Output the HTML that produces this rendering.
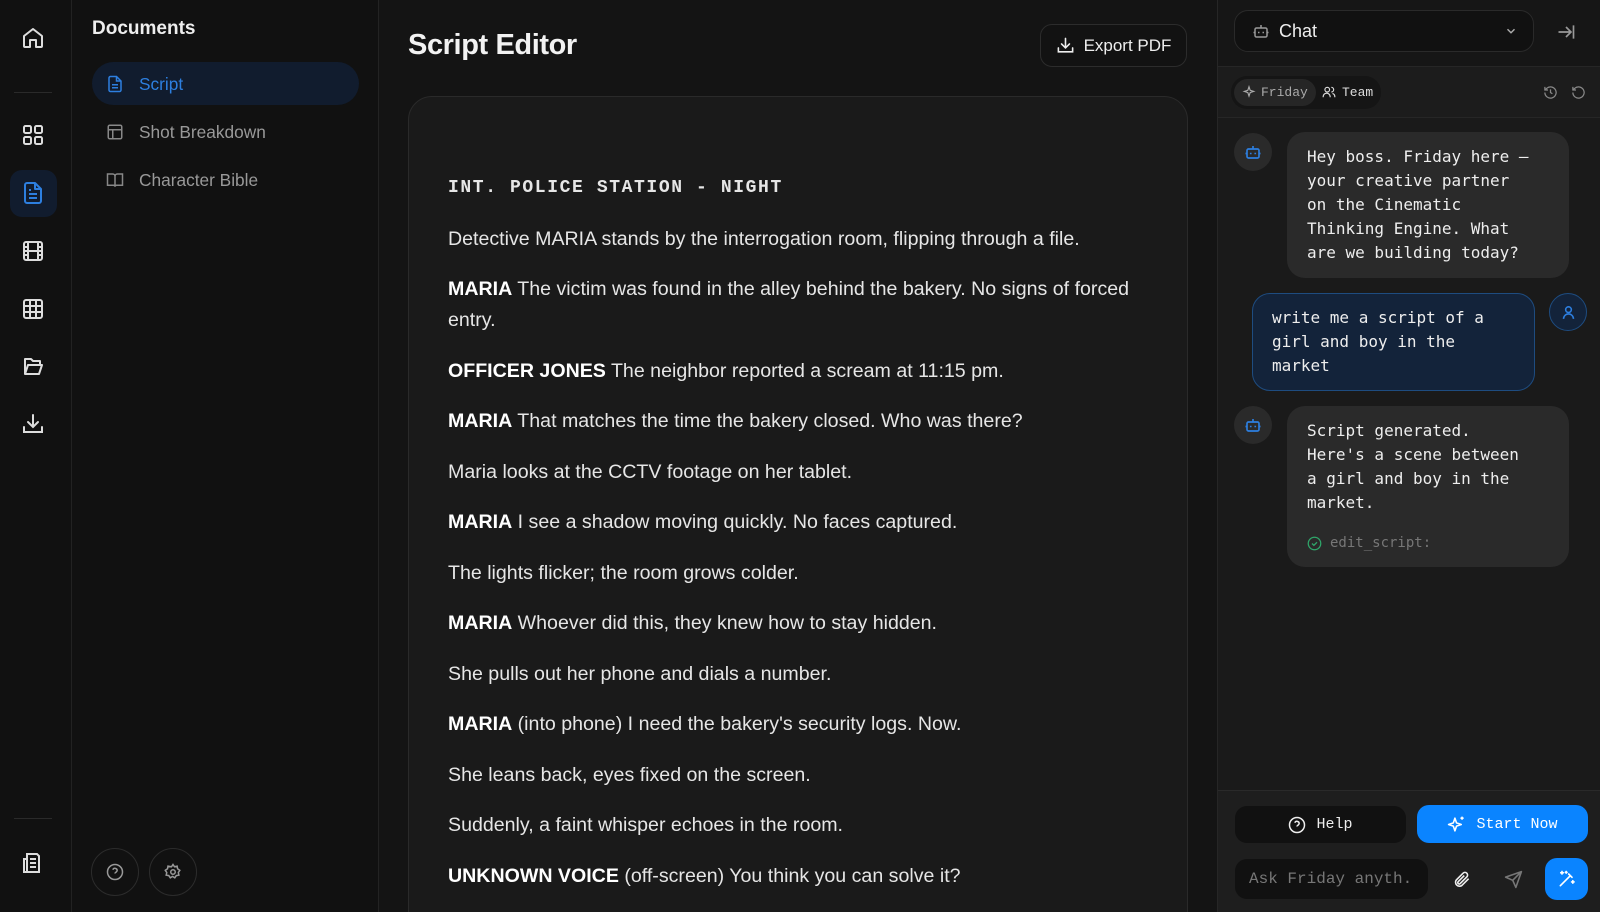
<!DOCTYPE html>
<html style="width:1600px;height:912px;overflow:hidden"><head><meta charset="utf-8"><style>
*{box-sizing:border-box;margin:0;padding:0}
body{width:1600px;height:912px;overflow:hidden;background:#111;font-family:"Liberation Sans",sans-serif;color:#eee;position:relative}
.abs{position:absolute}
svg{display:block}
.rail{left:0;top:0;width:72px;height:912px;background:#111;border-right:1px solid #222}
.ri{position:absolute;left:21px;width:24px;height:24px}
.side{left:72px;top:0;width:307px;height:912px;background:#111;border-right:1px solid #232323}
.main{left:379px;top:0;width:838px;height:912px;background:#141414}
.card{left:29px;top:96px;width:780px;height:840px;background:#1a1a1a;border:1px solid #2a2a2a;border-radius:24px}
.card p{font-size:19.6px;line-height:31px;color:#e6e6e6;margin-bottom:19.5px}
.card b{color:#fff}
.chat{left:1217px;top:0;width:383px;height:912px;background:#1a1a1a;border-left:1px solid #262626}
.mono{font-family:"Liberation Mono","DejaVu Sans Mono",monospace}
.bub{font-family:"DejaVu Sans Mono","Liberation Mono",monospace;font-size:16px;line-height:24px;color:#eee}
</style></head><body>
<div class="abs rail">
 <svg class="ri" style="top:26px" viewBox="0 0 24 24" fill="none" stroke="#ddd" stroke-width="2" stroke-linejoin="round"><path d="M3 10l9-7 9 7v10a1 1 0 0 1-1 1h-5v-7h-6v7H4a1 1 0 0 1-1-1z"/></svg>
 <div class="abs" style="left:14px;top:92px;width:38px;height:1px;background:#2a2a2a"></div>
 <svg class="ri" style="top:123px" viewBox="0 0 24 24" fill="none" stroke="#ddd" stroke-width="2"><rect x="3" y="3" width="7" height="7" rx="1.5"/><rect x="14" y="3" width="7" height="7" rx="1.5"/><rect x="3" y="14" width="7" height="7" rx="1.5"/><rect x="14" y="14" width="7" height="7" rx="1.5"/></svg>
 <div class="abs" style="left:10px;top:170px;width:47px;height:47px;border-radius:12px;background:#111c2e"></div>
 <svg class="ri" style="top:181px" viewBox="0 0 24 24" fill="none" stroke="#2d7fe0" stroke-width="2" stroke-linejoin="round"><path d="M14 2H6a2 2 0 0 0-2 2v16a2 2 0 0 0 2 2h12a2 2 0 0 0 2-2V8z"/><path d="M14 2v6h6M8 13h8M8 17h8M8 9h2"/></svg>
 <svg class="ri" style="top:239px" viewBox="0 0 24 24" fill="none" stroke="#ddd" stroke-width="2"><rect x="3" y="3" width="18" height="18" rx="2"/><path d="M7 3v18M17 3v18M3 8h4M3 12h18M3 16h4M17 8h4M17 16h4"/></svg>
 <svg class="ri" style="top:297px" viewBox="0 0 24 24" fill="none" stroke="#ddd" stroke-width="2"><rect x="3" y="3" width="18" height="18" rx="2"/><path d="M3 9h18M3 15h18M9 3v18M15 3v18"/></svg>
 <svg class="ri" style="top:354px" viewBox="0 0 24 24" fill="none" stroke="#ddd" stroke-width="2" stroke-linejoin="round"><path d="M4 20h14l3-9H7l-3 9zM4 20V5h6l2 2h7v4"/></svg>
 <svg class="ri" style="top:412px" viewBox="0 0 24 24" fill="none" stroke="#ddd" stroke-width="2" stroke-linecap="round"><path d="M12 3v12M7 10l5 5 5-5M3 15v5h18v-5"/></svg>
 <div class="abs" style="left:14px;top:818px;width:38px;height:1px;background:#2a2a2a"></div>
 <svg class="ri" style="top:851px" viewBox="0 0 24 24" fill="none" stroke="#ddd" stroke-width="2"><path d="M6 3h10l2 2v16H6zM3 8h3v13H3zM9 8h6M9 12h6M9 16h6"/></svg>
</div>
<div class="abs side">
 <div class="abs" style="left:20px;top:18px;font-size:19px;font-weight:bold;color:#eee">Documents</div>
 <div class="abs" style="left:20px;top:62px;width:267px;height:43px;border-radius:22px;background:#111c2e"></div>
 <svg class="abs" style="left:34px;top:75px" width="18" height="18" viewBox="0 0 24 24" fill="none" stroke="#2d7fe0" stroke-width="2"><path d="M14 2H6a2 2 0 0 0-2 2v16a2 2 0 0 0 2 2h12a2 2 0 0 0 2-2V8z"/><path d="M14 2v6h6M8 13h8M8 17h8"/></svg>
 <div class="abs" style="left:67px;top:74px;font-size:17.3px;color:#2d7fe0">Script</div>
 <svg class="abs" style="left:34px;top:123px" width="18" height="18" viewBox="0 0 24 24" fill="none" stroke="#888" stroke-width="2"><rect x="3" y="3" width="18" height="18" rx="2"/><path d="M3 9h18M9 9v12"/></svg>
 <div class="abs" style="left:67px;top:122px;font-size:17.3px;color:#999">Shot Breakdown</div>
 <svg class="abs" style="left:34px;top:171px" width="18" height="18" viewBox="0 0 24 24" fill="none" stroke="#888" stroke-width="2"><path d="M2 4h7a3 3 0 0 1 3 3v14a2 2 0 0 0-2-2H2zM22 4h-7a3 3 0 0 0-3 3v14a2 2 0 0 1 2-2h8z"/></svg>
 <div class="abs" style="left:67px;top:170px;font-size:17.3px;color:#999">Character Bible</div>
 <div class="abs" style="left:19px;top:848px;width:48px;height:48px;border-radius:50%;border:1px solid #2c2c2c;display:flex;align-items:center;justify-content:center"><svg width="18" height="18" viewBox="0 0 24 24" fill="none" stroke="#999" stroke-width="2"><circle cx="12" cy="12" r="10"/><path d="M9.1 9a3 3 0 0 1 5.8 1c0 2-3 2.5-3 4M12 17.5h.01"/></svg></div>
 <div class="abs" style="left:77px;top:848px;width:48px;height:48px;border-radius:50%;border:1px solid #2c2c2c;display:flex;align-items:center;justify-content:center"><svg width="18" height="18" viewBox="0 0 24 24" fill="none" stroke="#999" stroke-width="2"><circle cx="12" cy="12" r="3"/><path d="M12 2l2 3 3.5-.8.6 3.5 3 2-2 3 .8 3.5-3.5.6-2 3-3-2-3 2-2-3-3.5-.6.8-3.5-2-3 3-2 .6-3.5L10 5z"/></svg></div>
</div>
<div class="abs main">
 <div class="abs" style="left:29px;top:29px;font-size:29px;font-weight:bold;color:#f2f2f2;letter-spacing:-0.4px">Script Editor</div>
 <div class="abs" style="left:661px;top:24px;width:147px;height:43px;border:1px solid #2c2c2c;border-radius:12px;background:#121212;display:flex;align-items:center;justify-content:center;gap:9px;font-size:17px;color:#eee"><svg width="19" height="19" viewBox="0 0 24 24" fill="none" stroke="#eee" stroke-width="2" stroke-linecap="round"><path d="M12 3v12M7 10l5 5 5-5M3 15v5h18v-5"/></svg>Export PDF</div>
 <div class="abs card"><div style="padding:76px 39px 0 39px">
  <p style="font-family:'Liberation Mono',monospace;font-weight:bold;font-size:18px;letter-spacing:1.6px;margin-bottom:19.5px">INT. POLICE STATION - NIGHT</p>
  <p>Detective MARIA stands by the interrogation room, flipping through a file.</p>
  <p><b>MARIA</b> The victim was found in the alley behind the bakery. No signs of forced entry.</p>
  <p><b>OFFICER JONES</b> The neighbor reported a scream at 11:15 pm.</p>
  <p><b>MARIA</b> That matches the time the bakery closed. Who was there?</p>
  <p>Maria looks at the CCTV footage on her tablet.</p>
  <p><b>MARIA</b> I see a shadow moving quickly. No faces captured.</p>
  <p>The lights flicker; the room grows colder.</p>
  <p><b>MARIA</b> Whoever did this, they knew how to stay hidden.</p>
  <p>She pulls out her phone and dials a number.</p>
  <p><b>MARIA</b> (into phone) I need the bakery's security logs. Now.</p>
  <p>She leans back, eyes fixed on the screen.</p>
  <p>Suddenly, a faint whisper echoes in the room.</p>
  <p><b>UNKNOWN VOICE</b> (off-screen) You think you can solve it?</p>
 </div></div>
</div>
<div class="abs chat">
 <div class="abs" style="left:0;top:0;width:383px;height:67px;background:#161616;border-bottom:1px solid #262626"></div>
 <div class="abs" style="left:16px;top:10px;width:300px;height:42px;border:1px solid #2a2a2a;border-radius:14px;background:#111"></div>
 <svg class="abs" style="left:34px;top:22px" width="18" height="18" viewBox="0 0 24 24" fill="none" stroke="#999" stroke-width="2"><rect x="4" y="8" width="16" height="12" rx="2"/><path d="M12 8V4M2 14h2M20 14h2M9 13v2M15 13v2"/></svg>
 <div class="abs" style="left:61px;top:21px;font-size:18px;color:#eee">Chat</div>
 <svg class="abs" style="left:286px;top:24px" width="14" height="14" viewBox="0 0 24 24" fill="none" stroke="#aaa" stroke-width="2.5"><path d="M6 9l6 6 6-6"/></svg>
 <svg class="abs" style="left:338px;top:22px" width="20" height="20" viewBox="0 0 24 24" fill="none" stroke="#999" stroke-width="2"><path d="M3 12h14M12 6l6 6-6 6M21 4v16"/></svg>
 <div class="abs" style="left:0;top:67px;width:383px;height:51px;background:#1c1c1c;border-bottom:1px solid #262626"></div>
 <div class="abs" style="left:13px;top:76px;width:150px;height:33px;border-radius:16px;background:#151515"></div>
 <div class="abs mono" style="left:16px;top:79px;width:82px;height:27px;border-radius:14px;background:#262626;font-size:13px;color:#aaa;padding:6px 0 0 27px">Friday</div>
 <svg class="abs" style="left:24px;top:85px" width="14" height="14" viewBox="0 0 24 24" fill="none" stroke="#aaa" stroke-width="2"><path d="M12 3l2 6 6 2-6 2-2 6-2-6-6-2 6-2z"/></svg>
 <svg class="abs" style="left:104px;top:85px" width="14" height="14" viewBox="0 0 24 24" fill="none" stroke="#ddd" stroke-width="2"><circle cx="9" cy="8" r="4"/><path d="M2 21v-1a6 6 0 0 1 12 0v1M16 4a4 4 0 0 1 0 8M22 21v-1a6 6 0 0 0-4-5.6"/></svg>
 <div class="abs mono" style="left:124px;top:85px;font-size:13px;color:#ddd">Team</div>
 <svg class="abs" style="left:325px;top:85px" width="15" height="15" viewBox="0 0 24 24" fill="none" stroke="#888" stroke-width="2"><path d="M3 12a9 9 0 1 0 3-6.7L3 8M3 3v5h5M12 7v5l3 2"/></svg>
 <svg class="abs" style="left:353px;top:85px" width="15" height="15" viewBox="0 0 24 24" fill="none" stroke="#888" stroke-width="2"><path d="M3 12a9 9 0 1 0 3-6.7L3 8M3 3v5h5"/></svg>

 <div class="abs" style="left:16px;top:133px;width:38px;height:38px;border-radius:50%;background:#2a2a2a;display:flex;align-items:center;justify-content:center"><svg width="18" height="18" viewBox="0 0 24 24" fill="none" stroke="#2d7fe0" stroke-width="2.2"><rect x="4" y="8" width="16" height="12" rx="2"/><path d="M12 8V4M2 14h2M20 14h2M9 13v2M15 13v2"/></svg></div>
 <div class="abs bub" style="left:69px;top:132px;width:282px;height:146px;border-radius:18px;background:#2a2a2a;padding:13px 20px">Hey boss. Friday here —<br>your creative partner<br>on the Cinematic<br>Thinking Engine. What<br>are we building today?</div>
 <div class="abs bub" style="left:34px;top:293px;width:283px;height:98px;border-radius:18px;background:#13233a;border:1px solid #1e4c80;padding:12px 19px">write me a script of a<br>girl and boy in the<br>market</div>
 <div class="abs" style="left:331px;top:293px;width:38px;height:38px;border-radius:50%;background:#13233a;border:1px solid #1e4c80;display:flex;align-items:center;justify-content:center"><svg width="17" height="17" viewBox="0 0 24 24" fill="none" stroke="#2d7fe0" stroke-width="2.2"><circle cx="12" cy="8" r="4"/><path d="M5 21a7 7 0 0 1 14 0"/></svg></div>
 <div class="abs" style="left:16px;top:406px;width:38px;height:38px;border-radius:50%;background:#2a2a2a;display:flex;align-items:center;justify-content:center"><svg width="18" height="18" viewBox="0 0 24 24" fill="none" stroke="#2d7fe0" stroke-width="2.2"><rect x="4" y="8" width="16" height="12" rx="2"/><path d="M12 8V4M2 14h2M20 14h2M9 13v2M15 13v2"/></svg></div>
 <div class="abs bub" style="left:69px;top:406px;width:282px;height:161px;border-radius:18px;background:#2a2a2a;padding:13px 20px">Script generated.<br>Here's a scene between<br>a girl and boy in the<br>market.
  <div style="margin-top:16px;color:#777;font-size:14px;display:flex;align-items:center;gap:8px"><svg width="15" height="15" viewBox="0 0 24 24" fill="none" stroke="#2fa66a" stroke-width="2"><circle cx="12" cy="12" r="10"/><path d="M8 12l3 3 5-5"/></svg>edit_script:</div></div>

 <div class="abs" style="left:0;top:790px;width:383px;height:122px;background:#1e1e1e;border-top:1px solid #2a2a2a"></div>
 <div class="abs mono" style="left:17px;top:806px;width:171px;height:37px;border-radius:12px;background:#111;display:flex;align-items:center;justify-content:center;gap:10px;font-size:15px;color:#eee"><svg width="18" height="18" viewBox="0 0 24 24" fill="none" stroke="#eee" stroke-width="2"><circle cx="12" cy="12" r="10"/><path d="M9.1 9a3 3 0 0 1 5.8 1c0 2-3 2.5-3 4M12 17.5h.01"/></svg>Help</div>
 <div class="abs mono" style="left:199px;top:805px;width:171px;height:38px;border-radius:12px;background:#0a84ff;display:flex;align-items:center;justify-content:center;gap:10px;font-size:15px;color:#fff"><svg width="19" height="19" viewBox="0 0 24 24" fill="none" stroke="#fff" stroke-width="2" stroke-linejoin="round"><path d="M10 4l2 6 6 2-6 2-2 6-2-6-6-2 6-2zM19 2v4M17 4h4"/></svg>Start Now</div>
 <div class="abs mono" style="left:17px;top:859px;width:193px;height:40px;border-radius:12px;background:#111;font-size:16px;color:#777;padding:11px 0 0 14px;white-space:nowrap;overflow:hidden">Ask Friday anyth.</div>
 <svg class="abs" style="left:234px;top:870px" width="19" height="19" viewBox="0 0 24 24" fill="none" stroke="#eee" stroke-width="2"><path d="M21 11l-8.5 8.5a5 5 0 0 1-7-7L14 4a3.3 3.3 0 0 1 4.7 4.7l-8.5 8.5a1.7 1.7 0 0 1-2.4-2.4L15.5 7"/></svg>
 <svg class="abs" style="left:286px;top:870px" width="19" height="19" viewBox="0 0 24 24" fill="none" stroke="#777" stroke-width="2" stroke-linejoin="round"><path d="M22 2L2 9l9 4 4 9z M11 13l11-11"/></svg>
 <div class="abs" style="left:327px;top:858px;width:43px;height:42px;border-radius:12px;background:#0a84ff;display:flex;align-items:center;justify-content:center"><svg width="20" height="20" viewBox="0 0 24 24" fill="none" stroke="#fff" stroke-width="2" stroke-linecap="round"><path d="M4 20L16 8M14 6l4 4M6 3v3M4.5 4.5h3M19 14v3M17.5 15.5h3M11 3v2M10 4h2"/></svg></div>
</div>
</body></html>
